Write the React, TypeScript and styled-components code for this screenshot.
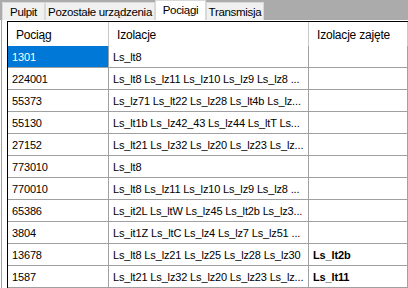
import { FC } from 'react'
import styled, { createGlobalStyle } from 'styled-components'

interface Row {
  train: string
  sections: string
  busy?: string
}

const rows: Row[] = [
  { train: '1301', sections: 'Ls_lt8' },
  { train: '224001', sections: 'Ls_lt8 Ls_lz11 Ls_lz10 Ls_lz9 Ls_lz8 ...' },
  { train: '55373', sections: 'Ls_lz71 Ls_lt22 Ls_lz28 Ls_lt4b Ls_lz...' },
  { train: '55130', sections: 'Ls_lt1b Ls_lz42_43 Ls_lz44 Ls_ltT Ls...' },
  { train: '27152', sections: 'Ls_lt21 Ls_lz32 Ls_lz20 Ls_lz23 Ls_lz...' },
  { train: '773010', sections: 'Ls_lt8' },
  { train: '770010', sections: 'Ls_lt8 Ls_lz11 Ls_lz10 Ls_lz9 Ls_lz8 ...' },
  { train: '65386', sections: 'Ls_it2L Ls_ltW Ls_lz45 Ls_lt2b Ls_lz3...' },
  { train: '3804', sections: 'Ls_it1Z Ls_ltC Ls_lz4 Ls_lz7 Ls_lz51 ...' },
  { train: '13678', sections: 'Ls_lt8 Ls_lz21 Ls_lz25 Ls_lz28 Ls_lz30', busy: 'Ls_lt2b' },
  { train: '1587', sections: 'Ls_lt21 Ls_lz32 Ls_lz20 Ls_lz23 Ls_lz...', busy: 'Ls_lt11' },
]

const tabs = [
  { label: 'Pulpit', width: 43 },
  { label: 'Pozostałe urządzenia', width: 110 },
  { label: 'Pociągi', width: 51, active: true },
  { label: 'Transmisja', width: 58 },
]

const App: FC = () => {
  return (
    <>
      <GlobalStyle />
      <Window>
        <TabStrip>
          {tabs.map((t) => (
            <Tab key={t.label} $active={t.active} $width={t.width}>
              {t.label}
            </Tab>
          ))}
        </TabStrip>
        <Page>
          <Grid>
            <HeaderCell>Pociąg</HeaderCell>
            <HeaderCell>Izolacje</HeaderCell>
            <HeaderCell>Izolacje zajęte</HeaderCell>
            {rows.map((r, i) => (
              <RowCells key={r.train} row={r} selected={i === 0} />
            ))}
          </Grid>
        </Page>
      </Window>
    </>
  )
}

const RowCells: FC<{ row: Row; selected: boolean }> = ({ row, selected }) => (
  <>
    <Cell $selected={selected}>{row.train}</Cell>
    <Cell>{row.sections}</Cell>
    <Cell $bold>{row.busy ?? ''}</Cell>
  </>
)

const GlobalStyle = createGlobalStyle`
  html, body {
    margin: 0;
    padding: 0;
    overflow: hidden;
    background: #ffffff;
    font-family: 'Liberation Sans', Arial, sans-serif;
  }
`

const Window = styled.div`
  width: 408px;
  height: 288px;
  display: flex;
  flex-direction: column;
  background: #ffffff;
  overflow: hidden;
`

const TabStrip = styled.div`
  height: 20px;
  flex: none;
  display: flex;
  align-items: flex-end;
  padding-left: 2px;
  background: #ababab;
`

const Tab = styled.div<{ $active?: boolean; $width: number }>`
  box-sizing: border-box;
  width: ${(p) => p.$width}px;
  height: ${(p) => (p.$active ? 20 : 18)}px;
  display: flex;
  align-items: ${(p) => (p.$active ? 'flex-start' : 'center')};
  justify-content: center;
  padding-top: ${(p) => (p.$active ? 3 : 0)}px;
  border: 1px solid #d9d9d9;
  border-bottom: none;
  background: ${(p) => (p.$active ? '#ffffff' : '#f0f0f0')};
  font-size: 11.5px;
  letter-spacing: -0.3px;
  color: #000;
  white-space: nowrap;
`

const Page = styled.div`
  flex: 1;
  display: flex;
  margin-left: 1px;
  padding: 1px 0 0 5px;
  border-left: 1px solid #a0a0a0;
  min-height: 0;
`

const Grid = styled.div`
  flex: 1;
  display: grid;
  grid-template-columns: 101px 200px 1fr;
  grid-template-rows: 24px repeat(11, 22px);
  align-content: start;
  border-top: 1px solid #000;
  border-left: 1px solid #000;
  min-width: 0;
`

const HeaderCell = styled.div`
  display: flex;
  align-items: center;
  padding: 2px 0 0 8px;
  border-right: 1px solid #c8c8c8;
  font-size: 12px;
  letter-spacing: -0.2px;
  color: #000;
  white-space: nowrap;
  overflow: hidden;
`

const Cell = styled.div<{ $selected?: boolean; $bold?: boolean }>`
  display: flex;
  align-items: center;
  padding-left: 4px;
  border-right: 1px solid #a0a0a0;
  border-bottom: 1px solid #a0a0a0;
  background: ${(p) => (p.$selected ? '#0078d7' : '#ffffff')};
  color: ${(p) => (p.$selected ? '#ffffff' : '#000000')};
  font-size: 11px;
  letter-spacing: -0.15px;
  font-weight: ${(p) => (p.$bold ? 700 : 400)};
  white-space: nowrap;
  overflow: hidden;
`

export default App
